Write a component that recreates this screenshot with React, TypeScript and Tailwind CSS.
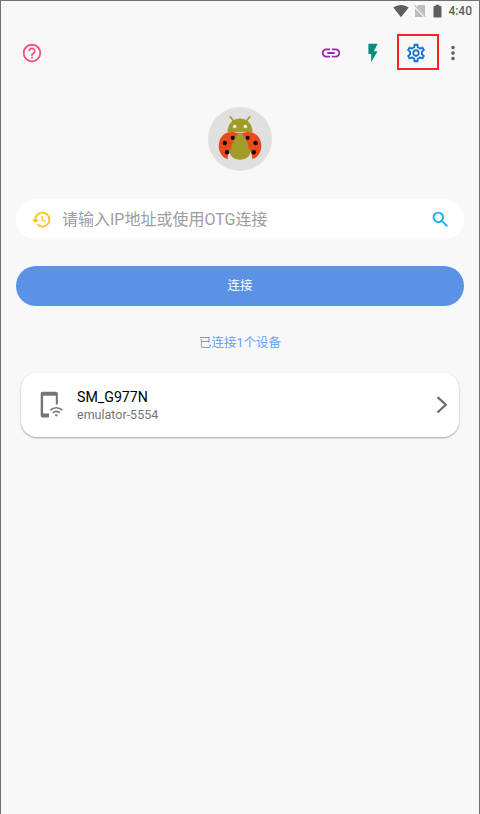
import React, { useState } from "react";
import {
  MdFlashOn,
  MdHelpOutline,
  MdHistory,
  MdLink,
  MdMoreVert,
  MdOutlineSettings,
  MdSearch,
} from "react-icons/md";

type Device = {
  name: string;
  serial: string;
};

const devices: Device[] = [{ name: "SM_G977N", serial: "emulator-5554" }];

/* --------------------------------- Icons ---------------------------------- */

function WifiIcon() {
  return (
    <svg viewBox="0 0 16 14" className="h-3.5 w-4" fill="currentColor">
      <path d="M0.300 3.600C5 0 11 0 15.700 3.600L8 13.200z" />
    </svg>
  );
}

function NoSimIcon() {
  return (
    <svg viewBox="0 0 12 14" className="h-3.5 w-3">
      <path d="M4.5 1H11v12H1V4.5z" fill="#bdbdbd" />
      <path d="M0 1.6L11.6 13.6" stroke="#f8f8f8" strokeWidth="2.2" />
      <path d="M0.3 1L11.8 13" stroke="#bdbdbd" strokeWidth="1.1" />
    </svg>
  );
}

function BatteryIcon() {
  return (
    <svg viewBox="0 0 9 14" className="h-3.5 w-[9px]" fill="currentColor">
      <path d="M2.700 0.700h3.600v1.300h1.400q0.800 0 0.800 0.800v10q0 0.800-0.800 0.800H1.300q-0.800 0-0.800-0.800v-10q0-0.800 0.800-0.800h1.400z" />
    </svg>
  );
}

function LadybugLogo() {
  return (
    <svg viewBox="0 0 64 64" className="size-16">
      <circle cx="32" cy="32" r="32" fill="#e0e0e0" />
      <path d="M22.2 9.800l4 5M41.800 9.800l-4 5" stroke="#a09c27" strokeWidth="1.600" strokeLinecap="round" />
      <path d="M19.5 25C19.5 17 25 11.500 32 11.500S44.500 17 44.500 25z" fill="#a09c27" />
      <circle cx="26.700" cy="19.500" r="1.800" fill="#f5f5f5" />
      <circle cx="37.400" cy="19.500" r="1.800" fill="#f5f5f5" />
      <path d="M27 25.800h10C41 30 43 36 43 42c0 7-5 10.800-11 10.800S21 49 21 42c0-6 2-12 6-16.200z" fill="#a09c27" />
      <path
        d="M30.300 26.500C23 22.800 14 25.500 11.400 34C9 42.500 13 50 19.600 52.300C20 46.500 21.500 43.500 23.800 40C22.700 37 26 35 26.300 32.500Q27.500 29 30.300 26.500z"
        fill="#ea4a1b"
      />
      <path
        d="M33.700 26.500C41 22.800 50 25.500 52.600 34C55 42.500 51 50 44.400 52.300C44 46.500 42.500 43.500 40.200 40C41.300 37 38 35 37.700 32.500Q36.500 29 33.700 26.500z"
        fill="#ea4a1b"
      />
      <g fill="#0c0705">
        <circle cx="24.700" cy="30.800" r="2.100" />
        <circle cx="16.800" cy="36" r="2.200" />
        <circle cx="19" cy="45.300" r="2.200" />
        <circle cx="39.700" cy="30.800" r="2.100" />
        <circle cx="47.600" cy="36" r="2.200" />
        <circle cx="45.800" cy="45.300" r="2.200" />
      </g>
    </svg>
  );
}

function WifiPhoneIcon() {
  return (
    <svg viewBox="0 0 24 28" className="h-7 w-6" fill="none">
      <path
        d="M2.500 0.800h13.500a1.800 1.800 0 0 1 1.800 1.800v11h-2V4.800H3.100v17.800H9v4H2.500a1.800 1.800 0 0 1-1.800-1.800V2.600a1.800 1.800 0 0 1 1.800-1.800z"
        fill="#757575"
      />
      <path d="M10.300 19.200C14 16 18.700 16 22.300 19.200" stroke="#757575" strokeWidth="1.600" />
      <path d="M12.800 21.900c2.300-1.900 5-1.900 7.100 0" stroke="#757575" strokeWidth="1.500" />
      <path d="M14.500 23.700q1.800-1.100 3.600 0L16.300 25.700z" fill="#757575" />
    </svg>
  );
}

/* -------------------------------- Sections -------------------------------- */

function StatusBar() {
  return (
    <div className="flex h-5 items-center justify-end pr-[7px] text-[#5f5f5f]">
      <WifiIcon />
      <span className="ml-[5px] flex">
        <NoSimIcon />
      </span>
      <span className="ml-[7px] flex">
        <BatteryIcon />
      </span>
      <span className="ml-[6px] text-[12px] leading-5 font-medium">4:40</span>
    </div>
  );
}

function Toolbar() {
  return (
    <div className="flex h-[64px] items-center pr-[15px] pl-[20px]">
      <button aria-label="帮助" className="text-[#f8517e]">
        <MdHelpOutline className="size-[22px]" />
      </button>
      <div className="ml-auto flex items-center">
        <button aria-label="链接" className="mr-[20px] text-[#9c27b0]">
          <MdLink className="size-[22px]" />
        </button>
        <button aria-label="快捷" className="mr-[13px] text-[#078b7d]">
          <MdFlashOn className="size-[22px]" />
        </button>
        <button
          aria-label="设置"
          className="mr-[3px] mb-[2px] flex h-[36px] w-[42px] items-center justify-center border-2 border-[#fb2229] pt-[2px] pr-1 text-[#1670d2]"
        >
          <MdOutlineSettings className="size-[22px]" />
        </button>
        <button aria-label="更多" className="text-[#646464]">
          <MdMoreVert className="size-[22px]" />
        </button>
      </div>
    </div>
  );
}

function DeviceCard({ device }: { device: Device }) {
  return (
    <button className="mx-[20px] flex h-[64px] items-center rounded-[16px] bg-white pr-[11px] pl-[19px] text-left shadow-[0_1px_2px_rgba(0,0,0,0.35)]">
      <WifiPhoneIcon />
      <span className="ml-[13px] flex flex-col pt-px">
        <span className="text-[14.200px] leading-[18px] text-black">{device.name}</span>
        <span className="text-[12.500px] leading-[18px] text-[#757575]">{device.serial}</span>
      </span>
      <svg viewBox="0 0 12 18" className="ml-auto h-[18px] w-3" fill="none">
        <path d="M1.500 1.100L9.800 8.800l-8.300 7.700" stroke="#6b6b6b" strokeWidth="2.200" />
      </svg>
    </button>
  );
}

export default function App() {
  const [address, setAddress] = useState("");

  return (
    <div className="flex h-[814px] w-[480px] flex-col border-x border-t border-[#757070] bg-[#f8f8f8] font-[Roboto,'Noto_Sans_CJK_SC',sans-serif]">
      <StatusBar />
      <Toolbar />

      <div className="mt-[22px] flex justify-center">
        <LadybugLogo />
      </div>

      <div className="mx-[15px] mt-[28px] flex h-10 items-center rounded-full bg-white pr-[13px] pl-[15px]">
        <MdHistory className="size-[21px] shrink-0 text-[#fcc011]" />
        <input
          value={address}
          onChange={(e) => setAddress(e.target.value)}
          placeholder="请输入IP地址或使用OTG连接"
          className="ml-[10px] h-10 min-w-0 flex-1 text-[16px] outline-none placeholder:text-[#9c9c9c]"
        />
        <MdSearch className="size-[21px] shrink-0 text-[#11aaf3]" />
      </div>

      <button className="mx-[15px] mt-[27px] flex h-[40px] items-center justify-center rounded-full bg-[#5a92e5] text-[12.500px] text-white">
        连接
      </button>

      <div className="mt-[27px] mb-[20px] h-[20px] text-center text-[12.500px] leading-[20px] text-[#61a0f8]">
        已连接{devices.length}个设备
      </div>

      {devices.map((d) => (
        <DeviceCard key={d.serial} device={d} />
      ))}
    </div>
  );
}
